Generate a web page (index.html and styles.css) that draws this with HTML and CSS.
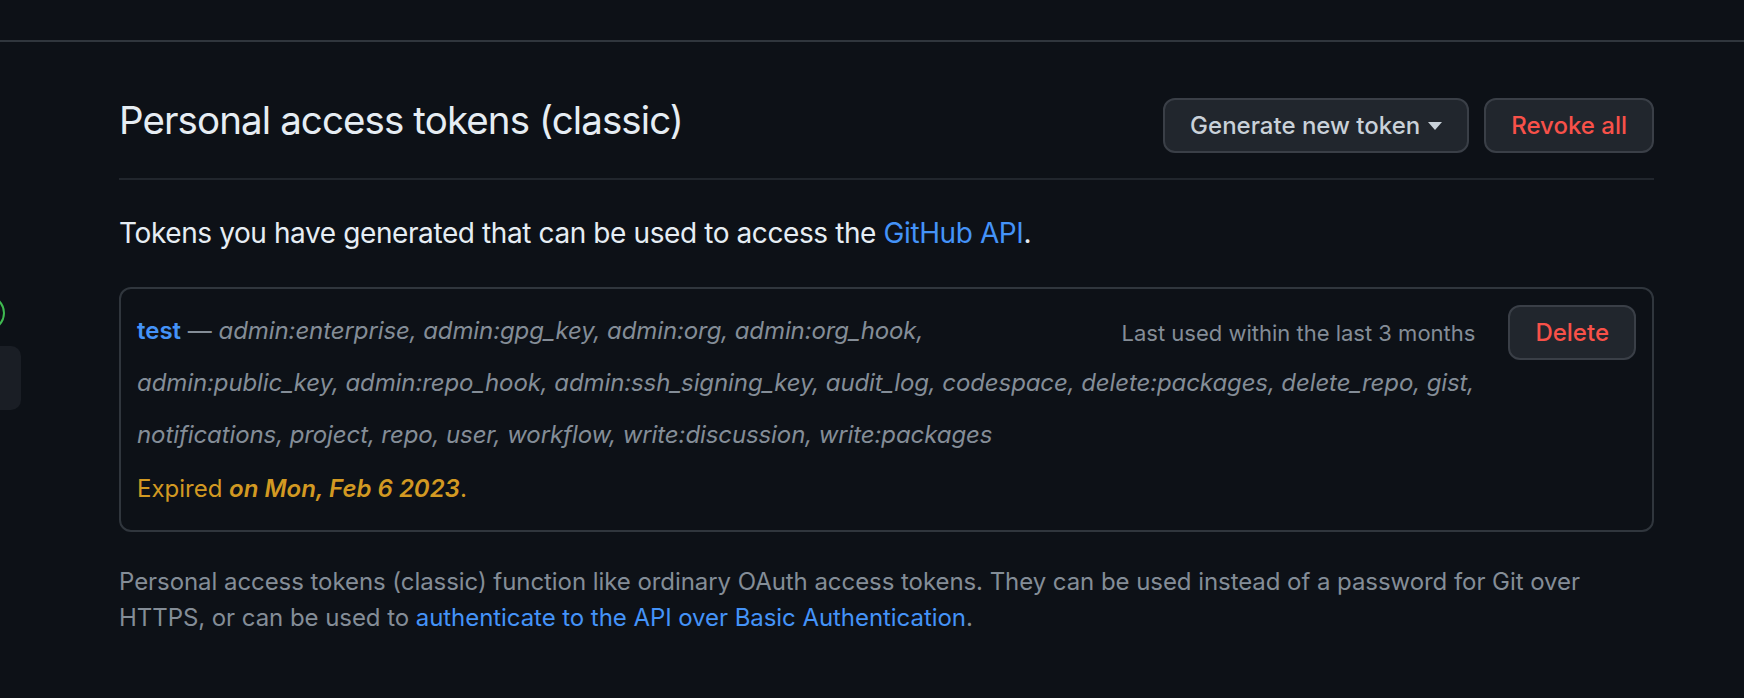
FILE: index.html
```html
<!DOCTYPE html>
<html lang="en">
<head>
<meta charset="utf-8">
<title>Personal access tokens (classic)</title>
<link rel="stylesheet" href="styles.css">
</head>
<body>
<div class="topbar"></div>
<div class="layout">
  <aside class="sidebar">
    <div class="avatar"></div>
    <div class="navitem"></div>
  </aside>
  <main class="content">
    <div class="subhead">
      <h2 class="subhead-heading">Personal access tokens (classic)</h2>
      <div class="actions">
        <button class="btn">Generate new token <span class="caret"></span></button>
        <button class="btn btn-danger">Revoke all</button>
      </div>
    </div>
    <p class="intro">Tokens you have generated that can be used to access the <a class="link" href="#">GitHub API</a>.</p>
    <div class="token-box">
      <div class="token-side">
        <span class="last-used">Last used within the last 3 months</span>
        <button class="btn btn-danger">Delete</button>
      </div>
      <div class="scopes"><a class="token-name" href="#">test</a> — <em class="scope-list">admin:enterprise, admin:gpg_key, admin:org, admin:org_hook,<br>admin:public_key, admin:repo_hook, admin:ssh_signing_key, audit_log, codespace, delete:packages, delete_repo, gist,<br>notifications, project, repo, user, workflow, write:discussion, write:packages</em></div>
      <div class="expired">Expired <em class="expired-date">on Mon, Feb 6 2023</em>.</div>
    </div>
    <p class="note">Personal access tokens (classic) function like ordinary OAuth access tokens. They can be used instead of a password for Git over<br>HTTPS, or can be used to <a class="link" href="#">authenticate to the API over Basic Authentication</a>.</p>
  </main>
</div>
</body>
</html>
```

FILE: styles.css
```css
* { box-sizing: border-box; }

html, body {
  margin: 0;
  padding: 0;
  background: #0d1117;
  height: 100%;
  overflow: hidden;
}

body {
  font-family: "Inter", "Noto Sans", sans-serif;
  color: #e6edf3;
}

.topbar {
  height: 42px;
  border-bottom: 2px solid #30363d;
}

.layout {
  display: flex;
}

.sidebar {
  width: 22px;
  flex: 0 0 22px;
  overflow: hidden;
  display: flex;
  flex-direction: column;
  padding-top: 253px;
}

.avatar {
  width: 36px;
  height: 36px;
  border: 2px solid #3fb950;
  border-radius: 50%;
  margin-left: -31px;
  flex: 0 0 auto;
}

.navitem {
  width: 200px;
  height: 64px;
  margin-top: 15px;
  margin-left: -179px;
  border-radius: 10px;
  background: #1a1e25;
  flex: 0 0 auto;
}

.content {
  margin-left: 97px;
  width: 1535px;
}

.subhead {
  display: flex;
  justify-content: space-between;
  align-items: flex-start;
  margin-top: 54px;
  padding-bottom: 25px;
  border-bottom: 2px solid #21262d;
}

.subhead-heading {
  margin: 0;
  font-size: 38.5px;
  font-weight: 400;
  line-height: 48px;
  letter-spacing: -0.9px;
  color: #e6edf3;
}

.actions {
  display: flex;
  gap: 15px;
  margin-top: 2px;
}

.btn {
  display: inline-flex;
  align-items: center;
  gap: 8px;
  height: 55px;
  padding: 0 25px;
  border: 2px solid #3a3f47;
  border-radius: 12px;
  background: #21262d;
  color: #c9d1d9;
  font-family: "Inter", "Noto Sans", sans-serif;
  font-size: 24px;
  font-weight: 500;
  line-height: 1;
  white-space: nowrap;
}

.btn-danger {
  color: #f85149;
}

.caret {
  width: 0;
  height: 0;
  border-left: 7.5px solid transparent;
  border-right: 7.5px solid transparent;
  border-top: 8px solid #c9d1d9;
}

.intro {
  margin: 32px 0 33px;
  font-size: 28px;
  line-height: 42px;
  letter-spacing: -0.4px;
  color: #e6edf3;
}

.link {
  color: #4493f8;
  text-decoration: none;
}

.token-box {
  border: 2px solid #30363d;
  border-radius: 12px;
  padding: 16px 16px 14px;
}

.token-side {
  float: right;
  display: flex;
  align-items: center;
  gap: 33px;
  margin-bottom: -10px;
}

.last-used {
  font-size: 22px;
  line-height: 26px;
  color: #848d97;
}

.scopes {
  font-size: 24px;
  line-height: 52px;
  color: #848d97;
}

.token-name {
  color: #4493f8;
  font-weight: 600;
  font-style: normal;
  text-decoration: none;
}

.scope-list {
  font-style: italic;
  letter-spacing: -0.1px;
}

.expired {
  font-size: 24px;
  line-height: 55px;
  color: #d29922;
}

.expired-date {
  font-style: italic;
  font-weight: 600;
}

.note {
  margin: 32px 0 0;
  font-size: 24px;
  line-height: 36px;
  letter-spacing: -0.06px;
  color: #848d97;
}
```
